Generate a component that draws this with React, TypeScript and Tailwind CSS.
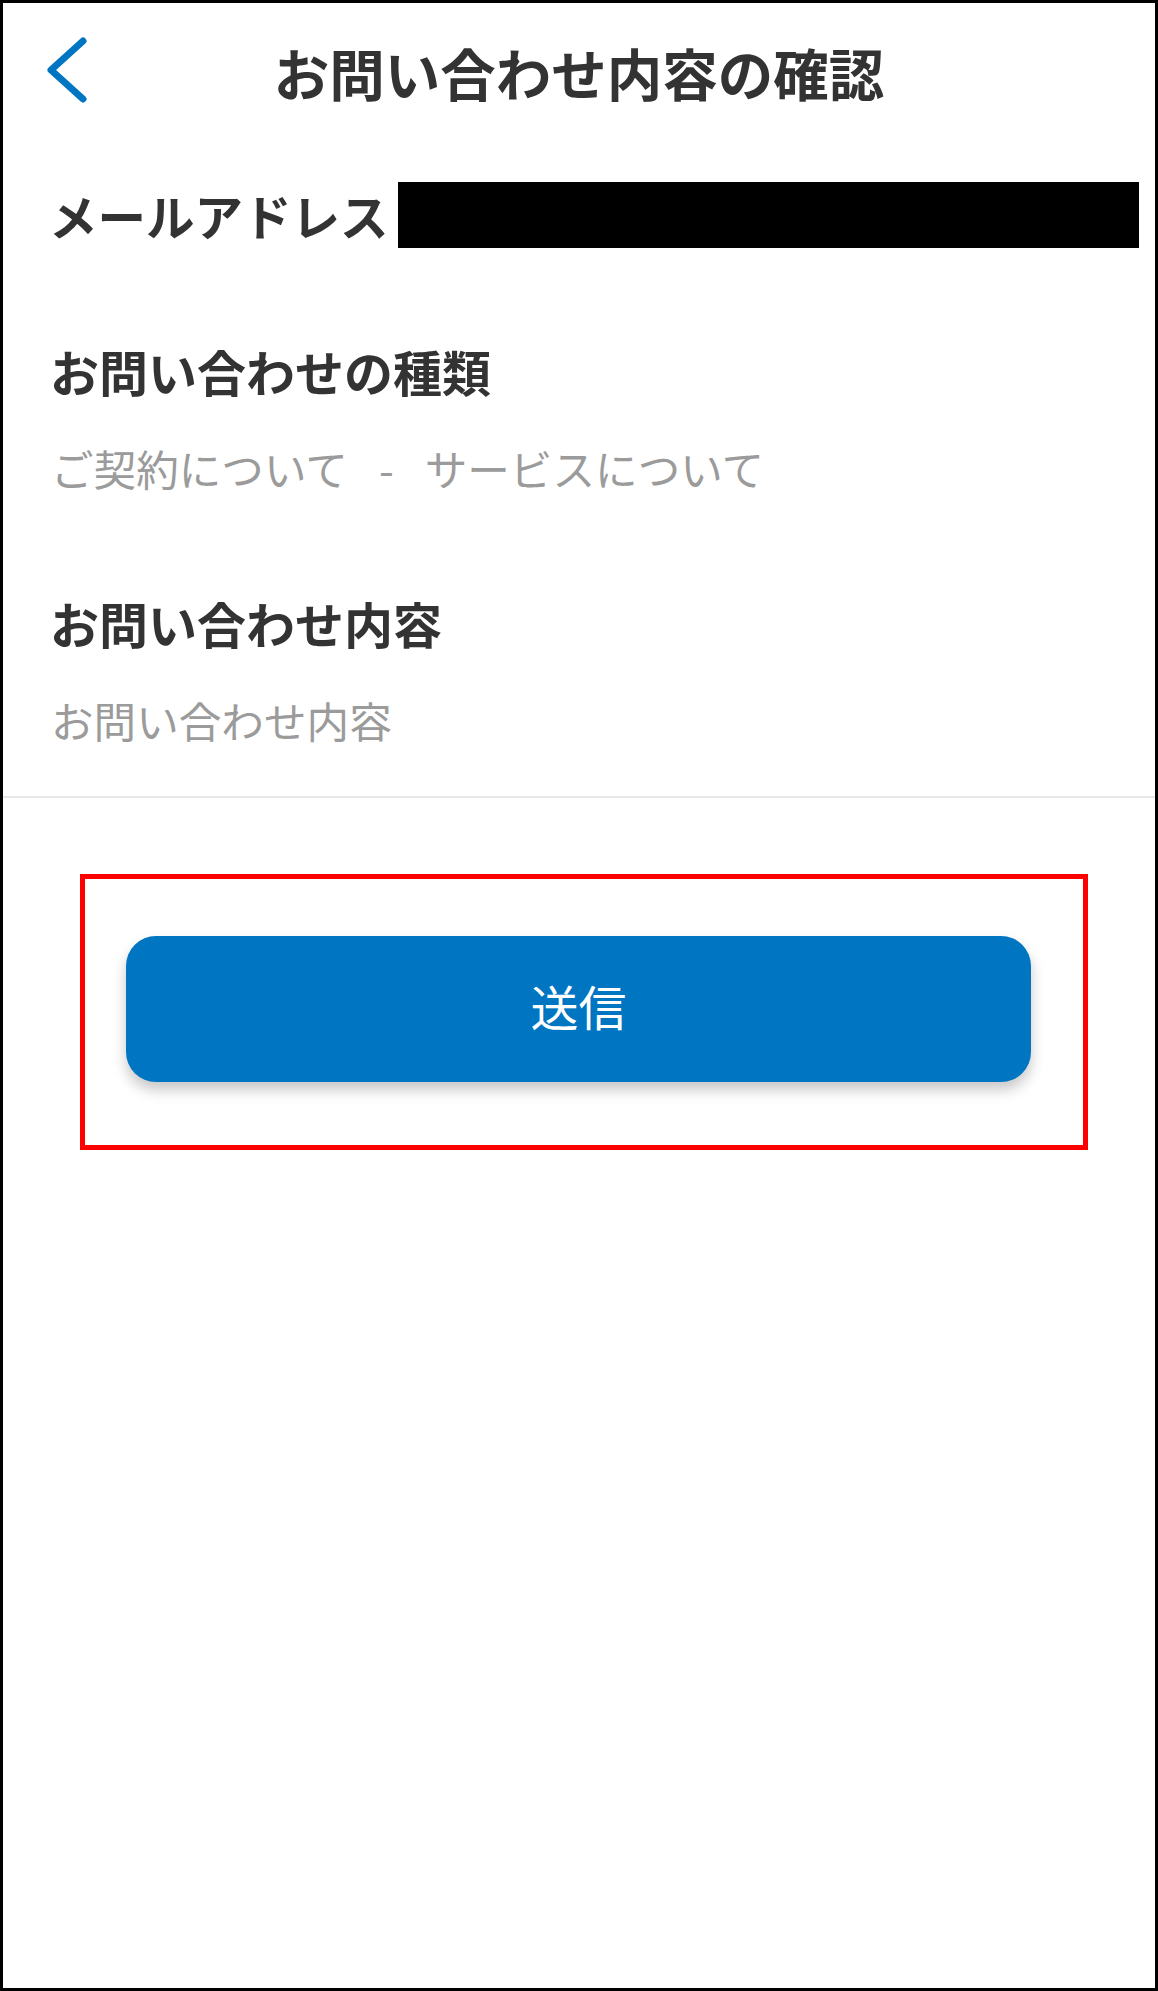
import React from 'react';

const jp = "font-['Noto_Sans_CJK_JP','Noto_Sans',sans-serif]";

function BackIcon() {
  return (
    <svg width="40" height="70" viewBox="0 0 40 70" className="shrink-0">
      <path
        d="M36 6 L4 35 L36 64"
        fill="none"
        stroke="#0075c2"
        strokeWidth="7"
        strokeLinecap="round"
        strokeLinejoin="round"
      />
    </svg>
  );
}

export default function App() {
  return (
    <div className={`${jp} w-[1158px] h-[1991px] box-border border-[3px] border-black bg-white flex flex-col`}>
      {/* Header */}
      <div className="relative h-[137px] flex items-center justify-center shrink-0">
        <div className="absolute left-[44px] top-[32px]">
          <BackIcon />
        </div>
        <h1 className="text-[55.5px] leading-[60px] font-bold text-[#333333]">
          お問い合わせ内容の確認
        </h1>
      </div>

      {/* Email */}
      <div className="mt-[42px] h-[66px] flex items-center pl-[46px] pr-[16px] gap-[9px] shrink-0">
        <span className="text-[48.5px] leading-[60px] font-bold text-[#333333] whitespace-nowrap">
          メールアドレス
        </span>
        <div className="flex-1 h-[66px] bg-black" />
      </div>

      {/* Type */}
      <div className="pl-[47px] mt-[93px] text-[49px] leading-[60px] font-bold text-[#333333]">
        お問い合わせの種類
      </div>
      <div className="pl-[48px] mt-[37px] text-[42.6px] leading-[60px] text-[#9b9b9b] whitespace-nowrap flex items-center">
        <span>ご契約について</span>
        <span className="mx-[31px]">-</span>
        <span>サービスについて</span>
      </div>

      {/* Content */}
      <div className="pl-[47px] mt-[95px] text-[49px] leading-[60px] font-bold text-[#333333]">
        お問い合わせ内容
      </div>
      <div className="pl-[48px] mt-[37px] text-[42.6px] leading-[60px] text-[#9b9b9b]">
        お問い合わせ内容
      </div>

      <div className="mt-[46px] h-[2px] bg-[#e8e8e8] shrink-0" />

      {/* Submit */}
      <div className="mt-[76px] ml-[77px] w-[1008px] box-border border-[5px] border-[#ff0000] pl-[41px] pr-[52px] pt-[57px] pb-[63px]">
        <button className="w-full h-[146px] pb-[8px] rounded-[30px] bg-[#0075c2] text-white text-[48px] leading-[60px] shadow-[0_8px_14px_rgba(0,0,0,0.22)]">
          送信
        </button>
      </div>
    </div>
  );
}
